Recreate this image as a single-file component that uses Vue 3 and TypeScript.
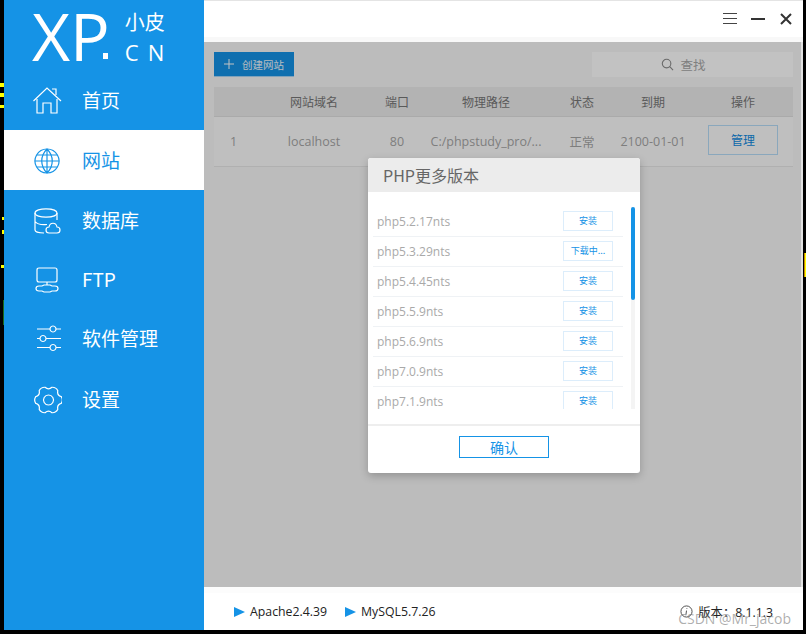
<template>
  <div class="screen">
    <i class="mark m1"></i><i class="mark m2"></i><i class="mark m3"></i><i class="mark m4"></i>
    <i class="mark m5"></i><i class="mark m6"></i><i class="mark m7"></i><i class="mark m8"></i>
    <div class="window">
      <aside class="side">
        <div class="logo">
          <span class="logo-xp">XP</span><span class="logo-dot"></span>
          <div class="logo-sub">
            <span>小皮</span>
            <span class="cn">CN</span>
          </div>
        </div>
        <nav class="nav">
          <div
            v-for="item in navItems"
            :key="item.label"
            class="nav-item"
            :class="{ active: item.label === '网站' }"
            :style="{ height: item.height + 'px' }"
          >
            <svg class="nav-icon" viewBox="0 0 29 29" fill="none" stroke="currentColor" stroke-width="1.2">
              <path v-for="(d, i) in item.paths" :key="i" :d="d" />
            </svg>
            <span class="nav-label">{{ item.label }}</span>
          </div>
        </nav>
      </aside>
      <main class="main">
        <header class="titlebar">
          <svg class="tb-menu" width="14" height="12" viewBox="0 0 14 12" stroke="#444" fill="none"><path d="M0 .5h14M0 5.500h14M0 10.500h14" /></svg>
          <span class="tb-min"></span>
          <svg class="tb-close" width="12" height="12" viewBox="0 0 12 12" stroke="#333" stroke-width="2" fill="none"><path d="M1 1l10 10M11 1L1 11" /></svg>
        </header>
        <section class="content">
          <div class="toolbar">
            <button class="create">
              <svg class="plus" width="10" height="10" viewBox="0 0 10 10" stroke="#fff" fill="none"><path d="M5 0v10M0 5h10" /></svg>
              创建网站
            </button>
            <div class="search">
              <svg width="13" height="13" viewBox="0 0 14 14" fill="none" stroke="#8c8c8c" stroke-width="1.2"><circle cx="6" cy="6" r="4.600" /><path d="M9.400 9.400l3.600 3.600" /></svg>
              <span>查找</span>
            </div>
          </div>
          <div class="table">
            <div class="row head">
              <span v-for="h in columns" :key="h">{{ h }}</span>
            </div>
            <div class="row body">
              <span class="num">1</span>
              <span>localhost</span>
              <span>80</span>
              <span>C:/phpstudy_pro/...</span>
              <span>正常</span>
              <span class="date">2100-01-01</span>
              <span><button class="manage">管理</button></span>
            </div>
          </div>
          <div class="mask"></div>
          <div class="dialog">
            <div class="dialog-title">PHP更多版本</div>
            <div class="dialog-body">
              <div class="list">
                <div v-for="v in versions" :key="v.name" class="ver">
                  <span>{{ v.name }}</span>
                  <button class="install">{{ v.action }}</button>
                </div>
              </div>
              <div class="scroll"><div class="thumb"></div></div>
            </div>
            <div class="dialog-foot"><button class="ok">确认</button></div>
          </div>
        </section>
        <footer class="status">
          <span class="svc"><i class="tri"></i>Apache2.4.39</span>
          <span class="svc"><i class="tri"></i>MySQL5.7.26</span>
          <span class="ver-info">
            <svg width="13" height="13" viewBox="0 0 14 14" fill="none" stroke="#444"><circle cx="7" cy="7" r="6" /><path d="M7.400 3.500v.8M7 6l-.6 4.400" /></svg>
            版本：8.1.1.3
          </span>
        </footer>
      </main>
    </div>
    <span class="watermark">CSDN @Mr_jacob</span>
  </div>
</template>

<script setup lang="ts">
interface NavItem {
  label: string;
  height: number;
  paths: string[];
}

// six rounded lobes, notch at top and bottom
function gearPath(cx: number, cy: number): string {
  const pt = (deg: number, r: number) => {
    const a = (deg * Math.PI) / 180;
    return `${(cx + r * Math.cos(a)).toFixed(2)} ${(cy + r * Math.sin(a)).toFixed(2)}`;
  };
  let d = `M${pt(-15, 13.2)}`;
  for (let i = 0; i < 6; i++) {
    const a = i * 60;
    d += `Q${pt(a, 15)} ${pt(a + 15, 13.2)}`;
    d += `Q${pt(a + 30, 9.5)} ${pt(a + 45, 13.2)}`;
  }
  return d + "Z";
}

const navItems: NavItem[] = [
  {
    label: "首页",
    height: 60,
    paths: ["M.5 15 14 2 28 15", "M4 13v14h6V17h8v10h6V13", "M19 3h4v6"],
  },
  {
    label: "网站",
    height: 60,
    paths: [
      "M14 3a12 12 0 1 0 .01 0Z",
      "M14 3c-7 7-7 17 0 24M14 3c7 7 7 17 0 24M14 3v24",
      "M2 15h24M4 9h20M4 21h20",
    ],
  },
  {
    label: "数据库",
    height: 60,
    paths: [
      "M2 7c0-5.500 22-5.500 22 0s-22 5.500-22 0Z",
      "M2 7v17c0 2 5 3 9 3M24 7v7M2 15.500c2 2.500 7 3.500 12 3",
      "M16 27c-4 0-4-6 0-6 1-5 7-5 8 0 4 0 4 6 0 6Z",
    ],
  },
  {
    label: "FTP",
    height: 58,
    paths: [
      "M6 3h16q2 0 2 2v10q0 2-2 2H6q-2 0-2-2V5q0-2 2-2Z",
      "M14 17v3",
      "M6 21h3l2-1h6l2 1h3q3 0 3 2.500t-3 2.500h-3l-2 1h-6l-2-1H6q-3 0-3-2.500t3-2.500Z",
    ],
  },
  {
    label: "软件管理",
    height: 60,
    paths: [
      "M4 5h13M23 5h5M4 14.500h3M13 14.500h15M4 23.500h13M23 23.500h5",
      "M20 2a3 3 0 1 0 .01 0Z",
      "M10 11.500a3 3 0 1 0 .01 0Z",
      "M20 20.500a3 3 0 1 0 .01 0Z",
    ],
  },
  {
    label: "设置",
    height: 62,
    paths: [gearPath(15.5, 15), "M15.500 10a5 5 0 1 0 .01 0Z"],
  },
];

const columns: string[] = ["", "网站域名", "端口", "物理路径", "状态", "到期", "操作"];

const versions = [
  { name: "php5.2.17nts", action: "安装" },
  { name: "php5.3.29nts", action: "下载中..." },
  { name: "php5.4.45nts", action: "安装" },
  { name: "php5.5.9nts", action: "安装" },
  { name: "php5.6.9nts", action: "安装" },
  { name: "php7.0.9nts", action: "安装" },
  { name: "php7.1.9nts", action: "安装" },
];
</script>

<style>
html,
body {
  margin: 0;
  background: #000;
}
</style>

<style scoped>
.screen {
  position: relative;
  width: 806px;
  height: 634px;
  overflow: hidden;
  background: #000;
  font-family: "Noto Sans CJK SC", "Noto Sans", sans-serif;
}
.mark {
  position: absolute;
  left: 0;
  width: 4px;
  height: 4px;
  background: #ffff00;
}
.m1 { top: 83px; }
.m2 { top: 93px; }
.m3 { top: 105px; height: 3px; }
.m4 { top: 217px; left: 2px; width: 2px; height: 3px; }
.m5 { top: 230px; left: 2px; width: 2px; }
.m6 { top: 265px; left: 1px; width: 3px; height: 3px; }
.m7 { top: 300px; height: 25px; width: 1px; left: 3px; background: #1a6a1a; }
.m8 { top: 253px; left: 804px; width: 2px; height: 24px; border-left: 1px solid #c88a00; box-sizing: border-box; }
.window {
  display: flex;
  margin-left: 4px;
  width: 799px;
  height: 630px;
}
.side {
  width: 200px;
  background: #1593e6;
  color: #fff;
  display: flex;
  flex-direction: column;
}
.logo {
  height: 70px;
  display: flex;
  align-items: flex-start;
  padding-left: 28px;
  box-sizing: border-box;
}
.logo-xp {
  font: 66px/79px "Open Sans", sans-serif;
  margin-top: -4px;
}
.logo-dot {
  width: 5px;
  height: 6px;
  background: #fff;
  margin: 53px 0 0 -7px;
  flex: none;
}
.logo-sub {
  margin: 9px 0 0 17px;
  display: flex;
  flex-direction: column;
  font-size: 20px;
  line-height: 26px;
}
.cn {
  font: 22px/26px "Open Sans", sans-serif;
  letter-spacing: 9px;
  margin-top: 4px;
}
.nav {
  display: flex;
  flex-direction: column;
}
.nav-item {
  display: flex;
  align-items: center;
  padding-left: 29px;
  font-size: 19px;
}
.nav-item.active {
  background: #fff;
  color: #1593e6;
}
.nav-icon {
  width: 29px;
  height: 29px;
  flex: none;
}
.nav-label {
  margin: 0 0 2px 20px;
}
.main {
  flex: 1;
  display: flex;
  flex-direction: column;
  background: #fff;
  min-width: 0;
}
.titlebar {
  height: 42px;
  display: flex;
  align-items: center;
  justify-content: flex-end;
  padding-right: 11px;
  box-sizing: border-box;
  border-top: 1px solid #e4e4e4;
  border-bottom: 5px solid #f8f8f8;
}
.tb-menu { margin-right: 14px; }
.tb-min {
  width: 14px;
  height: 2px;
  background: #333;
  margin-right: 15px;
}
.content {
  position: relative;
  height: 545px;
  background: #f7f7f7;
  box-sizing: border-box;
  padding: 10px 8px 0 10px;
  border-right: 2px solid #e2e2e2;
}
.toolbar {
  display: flex;
  justify-content: space-between;
  height: 25px;
  margin-bottom: 10px;
}
.create {
  width: 80px;
  height: 25px;
  border: 0;
  border-bottom: 1px solid #a9d5f5;
  padding: 0 0 0 10px;
  background: #1593e6;
  color: #eef6fc;
  font: 10.500px "Noto Sans CJK SC", sans-serif;
  display: flex;
  align-items: center;
}
.plus {
  margin-right: 8px;
}
.search {
  width: 201px;
  height: 25px;
  box-sizing: border-box;
  background: #fff;
  padding-right: 18px;
  display: flex;
  align-items: center;
  justify-content: center;
  gap: 6px;
  font-size: 12.500px;
  color: #a8a8a8;
}
.row {
  display: grid;
  grid-template-columns: 50px 100px 66px 112px 80px 62px 1fr;
  align-items: center;
  justify-items: center;
  font-size: 12px;
  color: #a6a6a6;
}
.row > :last-child {
  padding-left: 9px;
}
.head {
  height: 29px;
  background: #ebebeb;
  border-bottom: 1px solid #e0e0e0;
  color: #777;
}
.body {
  height: 50px;
  padding-bottom: 1px;
  box-sizing: border-box;
  background: #fcfcfc;
  border-bottom: 1px solid #e8e8e8;
  font: 12.500px "Open Sans", "Noto Sans CJK SC", sans-serif;
}
.num {
  justify-self: start;
  padding-left: 16px;
}
.date {
  white-space: nowrap;
}
.manage {
  display: block;
  width: 70px;
  height: 30px;
  margin-top: -3px;
  background: #fcfcfc;
  border: 1px solid #b6dcf7;
  color: #0f8ae0;
  font: 12px "Noto Sans CJK SC", sans-serif;
}
.mask {
  position: absolute;
  inset: 0;
  background: rgba(0, 0, 0, 0.24);
}
.dialog {
  position: absolute;
  left: 164px;
  top: 116px;
  width: 272px;
  height: 315px;
  background: #fff;
  border-radius: 3px;
  box-shadow: 0 3px 8px rgba(0, 0, 0, 0.22);
  display: flex;
  flex-direction: column;
}
.dialog-title {
  height: 34px;
  background: #ececec;
  color: #666;
  font-size: 16px;
  line-height: 35px;
  padding-left: 15px;
  border-radius: 3px 3px 0 0;
}
.dialog-body {
  height: 234px;
  display: flex;
  box-sizing: border-box;
  padding: 15px 5px 0 5px;
  border-bottom: 2px solid #eeeeee;
}
.list {
  width: 250px;
  height: 202px;
  overflow: hidden;
}
.ver {
  height: 29px;
  border-bottom: 1px solid #eff2f5;
  display: flex;
  align-items: center;
  justify-content: space-between;
  padding: 0 10px 0 4px;
  font: 12px/20px "Open Sans", sans-serif;
  color: #a9a9a9;
}
.install {
  width: 50px;
  height: 20px;
  margin-top: -2px;
  background: #fff;
  border: 1px solid #dcedfb;
  color: #1593e6;
  font: 9px "Noto Sans CJK SC", sans-serif;
  padding: 0;
}
.scroll {
  width: 4px;
  height: 202px;
  margin-left: 8px;
  background: #f4f4f4;
}
.thumb {
  width: 4px;
  height: 93px;
  background: #1593e6;
  border-radius: 2px;
}
.dialog-foot {
  flex: 1;
  display: flex;
  justify-content: center;
  padding-top: 10px;
}
.ok {
  width: 90px;
  height: 22px;
  background: #fff;
  border: 1px solid #1593e6;
  color: #1593e6;
  font: 14px "Noto Sans CJK SC", sans-serif;
  padding: 0;
}
.status {
  flex: 1;
  display: flex;
  align-items: center;
  padding: 0 30px 0 30px;
  border-top: 6px solid #fcfcfc;
  font: 12.300px "Open Sans", "Noto Sans CJK SC", sans-serif;
  color: #222;
  gap: 18px;
}
.svc {
  display: flex;
  align-items: center;
  gap: 5px;
}
.tri {
  width: 0;
  height: 0;
  border-left: 11px solid #1593e6;
  border-top: 5.500px solid transparent;
  border-bottom: 5.500px solid transparent;
}
.ver-info {
  margin-left: auto;
  display: flex;
  align-items: center;
  gap: 5px;
}
.watermark {
  position: absolute;
  right: 15px;
  top: 609px;
  font: 14px "Open Sans", sans-serif;
  color: rgba(120, 120, 120, 0.6);
}
</style>
